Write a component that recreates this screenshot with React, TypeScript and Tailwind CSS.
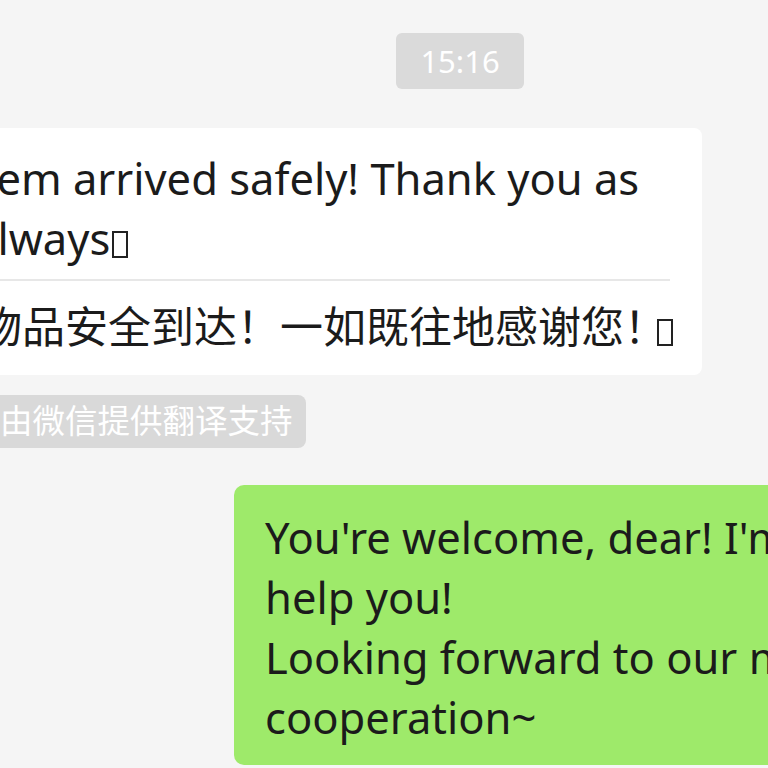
import React from 'react';

const font = { fontFamily: '"Noto Sans", "Noto Sans CJK SC", sans-serif' };

// missing-emoji box, as the original renders it
const Tofu = ({ tight }: { tight?: boolean }) => (
  <span
    className={
      tight
        ? 'inline-block w-[16px] h-[27px] border-2 border-[#222] align-[-3px] ml-[-10px]'
        : 'inline-block w-[16px] h-[27px] border-2 border-[#222] align-[-3px] ml-[2px]'
    }
  />
);

export default function App() {
  return (
    <div
      className="w-[768px] h-[768px] overflow-hidden bg-[#f5f5f5] flex flex-col text-[#1b1b1b]"
      style={font}
    >
      {/* time stamp */}
      <div className="flex justify-center pt-[33px] pl-[152px]">
        <div className="h-[56px] w-[128px] rounded-[6px] bg-[#dadada] text-white text-[31px] flex items-center justify-center">
          15:16
        </div>
      </div>

      {/* incoming bubble */}
      <div className="mt-[39px] ml-[-64px] flex">
        <div className="w-[766px] bg-white rounded-[8px] pt-[20px] pb-[18px] pl-[30px] pr-[34px]">
          <div className="text-[43.5px] leading-[60px]">
            <div className="whitespace-nowrap">Item arrived safely! Thank you as</div>
            <div className="whitespace-nowrap ml-[7px]">
              always
              <Tofu />
            </div>
          </div>
          <div className="mt-[11px] mr-[-2px] h-[2px] bg-[#e7e7e7]" />
          <div className="mt-[16px] ml-[13px] text-[43px] leading-[60px] whitespace-nowrap">
            物品安全到达！一如既往地感谢您！
            <Tofu tight />
          </div>
        </div>
      </div>

      {/* translation tag */}
      <div className="mt-[20px] ml-[-40px] flex">
        <div className="h-[53px] rounded-[8px] bg-[#d9d9d9] text-white text-[32.5px] flex items-center pl-[6px] pr-[13px] whitespace-nowrap">
          <span className="w-[34px]" />
          由微信提供翻译支持
        </div>
      </div>

      {/* outgoing bubble */}
      <div className="mt-[37px] ml-[234px] flex">
        <div className="w-[760px] shrink-0 bg-[#9eea6a] rounded-[10px] pt-[22px] pb-[18px] pl-[31px] text-[43.5px] leading-[60px]">
          <div className="whitespace-nowrap">You're welcome, dear! I'm glad to</div>
          <div className="whitespace-nowrap">help you!</div>
          <div className="whitespace-nowrap">Looking forward to our mutual</div>
          <div className="whitespace-nowrap">cooperation~</div>
        </div>
      </div>
    </div>
  );
}
